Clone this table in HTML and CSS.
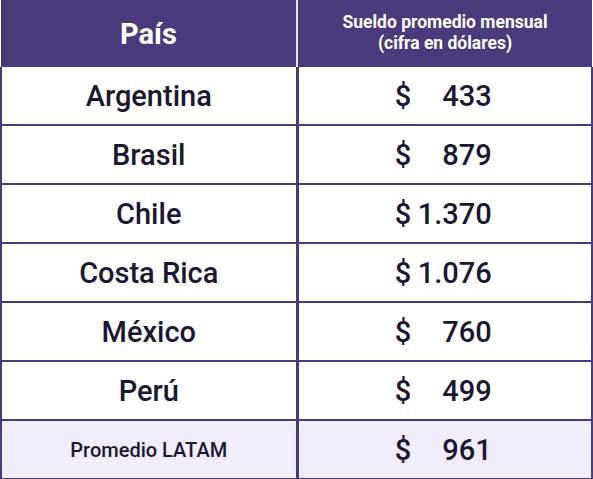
FILE: index.html
```html
<!DOCTYPE html>
<html lang="es">

<head>
    <meta charset="UTF-8">
    <title>Sueldo promedio LATAM</title>
    <link rel="stylesheet" href="styles.css">
</head>

<body>
    <table class="salary-table">
        <thead>
            <tr>
                <th class="col-country">País</th>
                <th class="col-salary small">Sueldo promedio mensual<br>(cifra en dólares)</th>
            </tr>
        </thead>
        <tbody>
            <tr>
                <td>Argentina</td>
                <td><span class="amount"><span>$</span><span>433</span></span></td>
            </tr>
            <tr>
                <td>Brasil</td>
                <td><span class="amount"><span>$</span><span>879</span></span></td>
            </tr>
            <tr>
                <td>Chile</td>
                <td><span class="amount"><span>$</span><span>1.370</span></span></td>
            </tr>
            <tr>
                <td>Costa Rica</td>
                <td><span class="amount"><span>$</span><span>1.076</span></span></td>
            </tr>
            <tr>
                <td>México</td>
                <td><span class="amount"><span>$</span><span>760</span></span></td>
            </tr>
            <tr>
                <td>Perú</td>
                <td><span class="amount"><span>$</span><span>499</span></span></td>
            </tr>
            <tr class="total">
                <td class="total-label">Promedio LATAM</td>
                <td><span class="amount"><span>$</span><span>961</span></span></td>
            </tr>
        </tbody>
    </table>
</body>

</html>
```

FILE: styles.css
```css
body {
    margin: 0;
    background-color: #fff;
    font-family: Roboto, "Liberation Sans", sans-serif;
    color: #1b1632;
}

.salary-table {
    width: 593px;
    height: 479px;
    border-collapse: collapse;
    table-layout: fixed;
}

th {
    height: 65px;
    padding: 0;
    background-color: #4a3a7b;
    color: #fff;
    font-size: 29px;
    font-weight: 700;
    text-align: center;
}

.col-country {
    width: 295px;
    border-right: 2px solid #e9e5f3;
}

th.small {
    font-size: 17.5px;
    font-weight: 700;
    line-height: 21px;
    padding-bottom: 2px;
}

td {
    height: 57px;
    padding: 0;
    text-align: center;
    font-size: 29px;
    font-weight: 500;
    border: 2px solid #4a3a7b;
    border-top: none;
}

td:first-child {
    border-right-width: 3px;
}

.amount {
    display: inline-flex;
    justify-content: space-between;
    width: 97px;
    margin-right: 3px;
}

.total {
    background-color: #f1edfc;
}

.total-label {
    font-size: 20px;
}
```
